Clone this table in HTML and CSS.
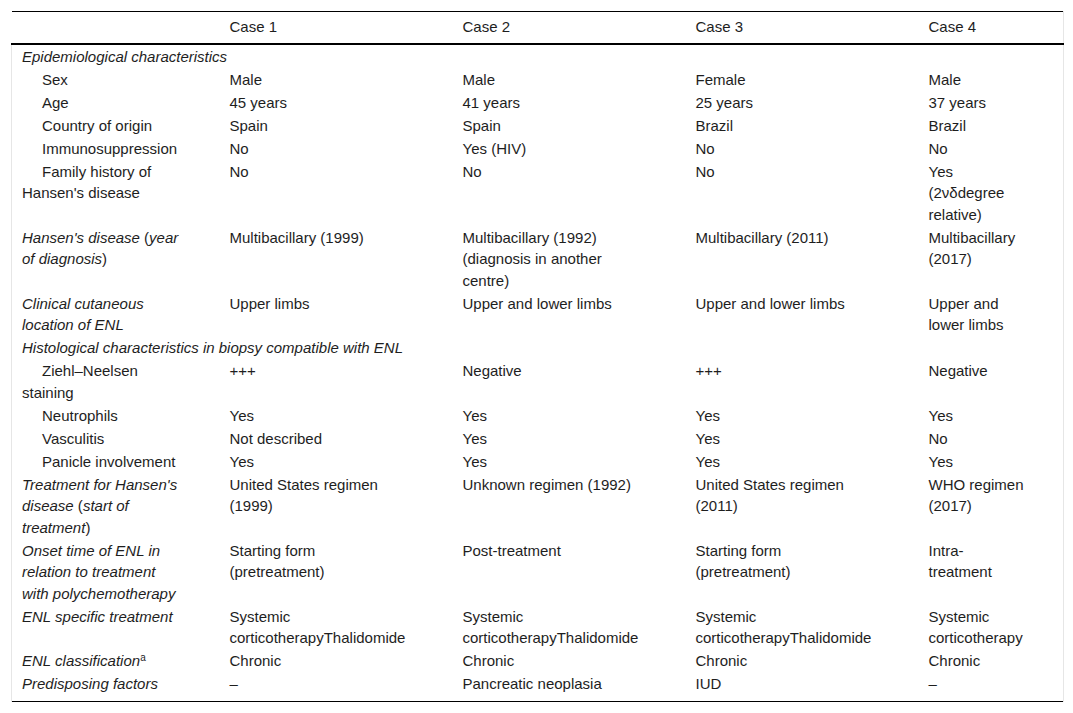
FILE: index.html
```html
<!DOCTYPE html>
<html lang="en">
<head>
<meta charset="utf-8">
<title>ENL cases</title>
<link rel="stylesheet" href="styles.css">
</head>
<body>
<div class="wrap">
<table class="cases">
  <thead>
    <tr>
      <th class="c1"></th>
      <th class="cx">Case 1</th>
      <th class="cx">Case 2</th>
      <th class="cx">Case 3</th>
      <th class="c5">Case 4</th>
    </tr>
  </thead>
  <tbody>
    <tr><td class="section" colspan="5"><i>Epidemiological characteristics</i></td></tr>
    <tr><td class="sub">Sex</td><td>Male</td><td>Male</td><td>Female</td><td class="last">Male</td></tr>
    <tr><td class="sub">Age</td><td>45 years</td><td>41 years</td><td>25 years</td><td class="last">37 years</td></tr>
    <tr><td class="sub">Country of origin</td><td>Spain</td><td>Spain</td><td>Brazil</td><td class="last">Brazil</td></tr>
    <tr><td class="sub">Immunosuppression</td><td>No</td><td>Yes (HIV)</td><td>No</td><td class="last">No</td></tr>
    <tr><td class="sub">Family history of Hansen's disease</td><td>No</td><td>No</td><td>No</td><td class="last">Yes (2νδdegree relative)</td></tr>
    <tr><td class="lab"><i>Hansen's disease</i> (<i>year of diagnosis</i>)</td><td>Multibacillary (1999)</td><td>Multibacillary (1992) (diagnosis in another centre)</td><td>Multibacillary (2011)</td><td class="last">Multibacillary (2017)</td></tr>
    <tr><td class="lab"><i>Clinical cutaneous location of ENL</i></td><td>Upper limbs</td><td>Upper and lower limbs</td><td>Upper and lower limbs</td><td class="last">Upper and lower limbs</td></tr>
    <tr><td class="section" colspan="5"><i>Histological characteristics in biopsy compatible with ENL</i></td></tr>
    <tr><td class="sub">Ziehl–Neelsen staining</td><td>+++</td><td>Negative</td><td>+++</td><td class="last">Negative</td></tr>
    <tr><td class="sub">Neutrophils</td><td>Yes</td><td>Yes</td><td>Yes</td><td class="last">Yes</td></tr>
    <tr><td class="sub">Vasculitis</td><td>Not described</td><td>Yes</td><td>Yes</td><td class="last">No</td></tr>
    <tr><td class="sub">Panicle involvement</td><td>Yes</td><td>Yes</td><td>Yes</td><td class="last">Yes</td></tr>
    <tr><td class="lab"><i>Treatment for Hansen's disease</i> (<i>start of treatment</i>)</td><td>United States regimen (1999)</td><td>Unknown regimen (1992)</td><td>United States regimen (2011)</td><td class="last">WHO regimen (2017)</td></tr>
    <tr><td class="lab"><i>Onset time of ENL in relation to treatment with polychemotherapy</i></td><td>Starting form (pretreatment)</td><td>Post-treatment</td><td>Starting form (pretreatment)</td><td class="last">Intra-treatment</td></tr>
    <tr><td class="lab"><i>ENL specific treatment</i></td><td>Systemic corticotherapyThalidomide</td><td>Systemic corticotherapyThalidomide</td><td>Systemic corticotherapyThalidomide</td><td class="last">Systemic corticotherapy</td></tr>
    <tr><td class="lab"><i>ENL classification</i><sup>a</sup></td><td>Chronic</td><td>Chronic</td><td>Chronic</td><td class="last">Chronic</td></tr>
    <tr class="end"><td class="lab"><i>Predisposing factors</i></td><td>–</td><td>Pancreatic neoplasia</td><td>IUD</td><td class="last">–</td></tr>
  </tbody>
</table>
</div>
</body>
</html>
```
FILE: styles.css
```css
html, body {
  margin: 0;
  padding: 0;
  background: #ffffff;
}

.wrap {
  padding: 11px 0 0 11px;
}

.cases {
  width: 1052px;
  table-layout: fixed;
  border-collapse: collapse;
  font-family: "Liberation Sans", Arial, sans-serif;
  font-size: 15px;
  line-height: 21.5px;
  color: #1e1e1e;
  border-top: 1px solid #000;
  border-bottom: 1px solid #000;
}

.cases th,
.cases td {
  box-sizing: border-box;
  text-align: left;
  vertical-align: top;
  font-weight: normal;
  padding: 0.75px 0 0.75px 10px;
}

.cases thead th {
  padding-top: 4px;
  padding-bottom: 5.5px;
  border-bottom: 2px solid #000;
}

.cases th.c1 { width: 208px; }
.cases th.cx { width: 233px; }
.cases th.c5 { width: 145px; border-right: 1px solid #e6e6e6; }

.cases td { padding-right: 47px; }
.cases td:first-child {
  padding-right: 38px;
  border-left: 1px solid #e6e6e6;
}
.cases td.last {
  padding-right: 38px;
  border-right: 1px solid #e6e6e6;
}
.cases td.section {
  padding-right: 10px;
  border-right: 1px solid #e6e6e6;
}

.cases td.sub {
  text-indent: 20px;
}

.cases sup {
  font-size: 10px;
  line-height: 0;
  vertical-align: 5px;
}

.cases tr.end td {
  padding-bottom: 6px;
}
```
